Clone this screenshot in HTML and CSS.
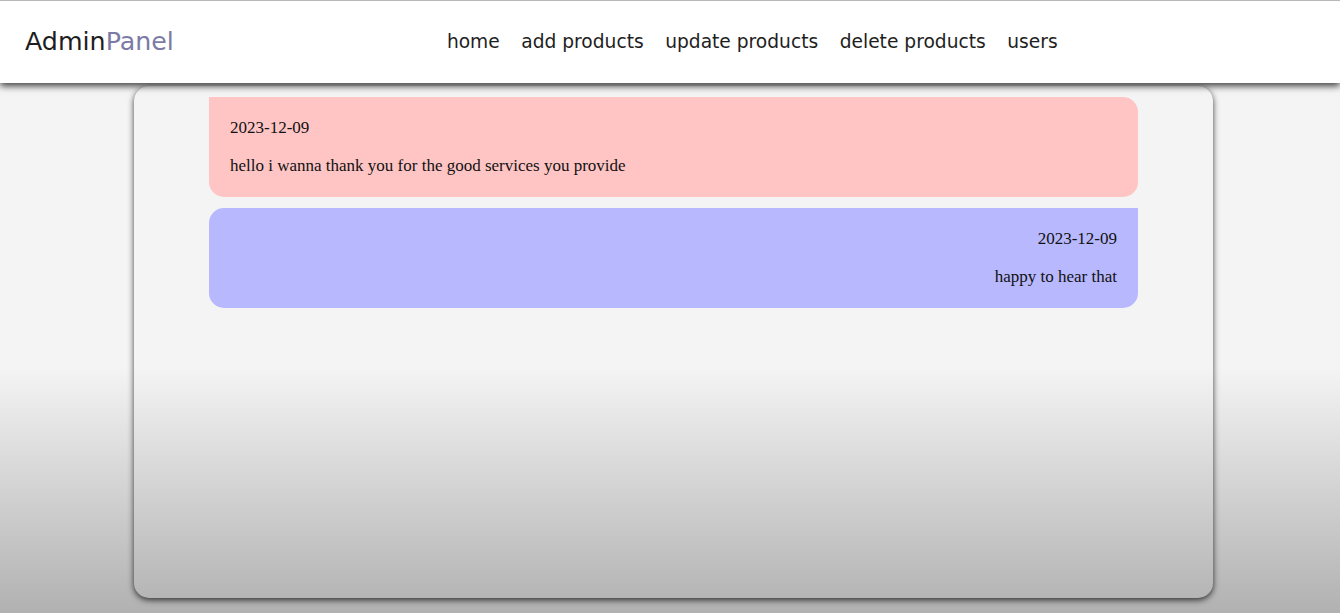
FILE: index.html
```html
<!DOCTYPE html>
<html lang="en">
<head>
  <meta charset="UTF-8">
  <meta name="viewport" content="width=device-width, initial-scale=1.0">
  <title>Admin Panel - Messages</title>
  <link rel="stylesheet" href="styles.css">
</head>
<body>
  <nav class="navbar">
    <div class="logo">Admin<span>Panel</span></div>
    <ul class="nav-links">
      <li><a href="#">home</a></li>
      <li><a href="#">add products</a></li>
      <li><a href="#">update products</a></li>
      <li><a href="#">delete products</a></li>
      <li><a href="#">users</a></li>
    </ul>
  </nav>

  <!-- Conversa com o usuario -->
  <div class="chat-box">
    <div class="message user-msg">
      <p>2023-12-09</p>
      <p>hello i wanna thank you for the good services you provide</p>
    </div>
    <div class="message admin-msg">
      <p>2023-12-09</p>
      <p>happy to hear that</p>
    </div>
  </div>
</body>
</html>
```

FILE: styles.css
```css
html, body {
  height: 100%;
}

body {
  margin: 0;
  padding: 0;
  font-family: "Liberation Serif", "Times New Roman", serif;
  background: linear-gradient(to bottom, #f4f4f4 0, #f4f4f4 60%, #b1b1b1 100%);
  overflow: hidden;
}

.navbar {
  display: flex;
  align-items: center;
  height: 80px;
  padding-bottom: 2px;
  background-color: #fff;
  border-top: 1px solid #b8b8b8;
  box-shadow: 0 3px 7px rgba(0, 0, 0, 0.75);
  position: relative;
  z-index: 2;
  font-family: "DejaVu Sans", Verdana, sans-serif;
}

.logo {
  padding-left: 25px;
  font-size: 25.3px;
  color: #1e1e1e;
}

.logo span {
  color: #7b7ba6;
}

.nav-links {
  display: flex;
  gap: 21.5px;
  list-style: none;
  margin: 0 0 0 273px;
  padding: 0;
}

.nav-links a {
  color: #1e1e1e;
  text-decoration: none;
  font-size: 18.65px;
}

.chat-box {
  width: 1079px;
  height: 512px;
  margin: 3px 0 0 134px;
  padding-top: 11px;
  box-sizing: border-box;
  border-radius: 15px;
  box-shadow: 0 2px 6px rgba(0, 0, 0, 0.75);
}

.message {
  width: 929px;
  margin: 0 auto 11px;
  padding: 2px 21px 3px;
  box-sizing: border-box;
  border-radius: 15px;
  font-size: 17px;
  color: #111;
}

.message p {
  margin: 19px 0;
  line-height: 19px;
}

.user-msg {
  background-color: #ffc5c5;
  border-top-left-radius: 0;
}

.admin-msg {
  background-color: #b8b8ff;
  border-top-right-radius: 0;
  text-align: right;
}
```
